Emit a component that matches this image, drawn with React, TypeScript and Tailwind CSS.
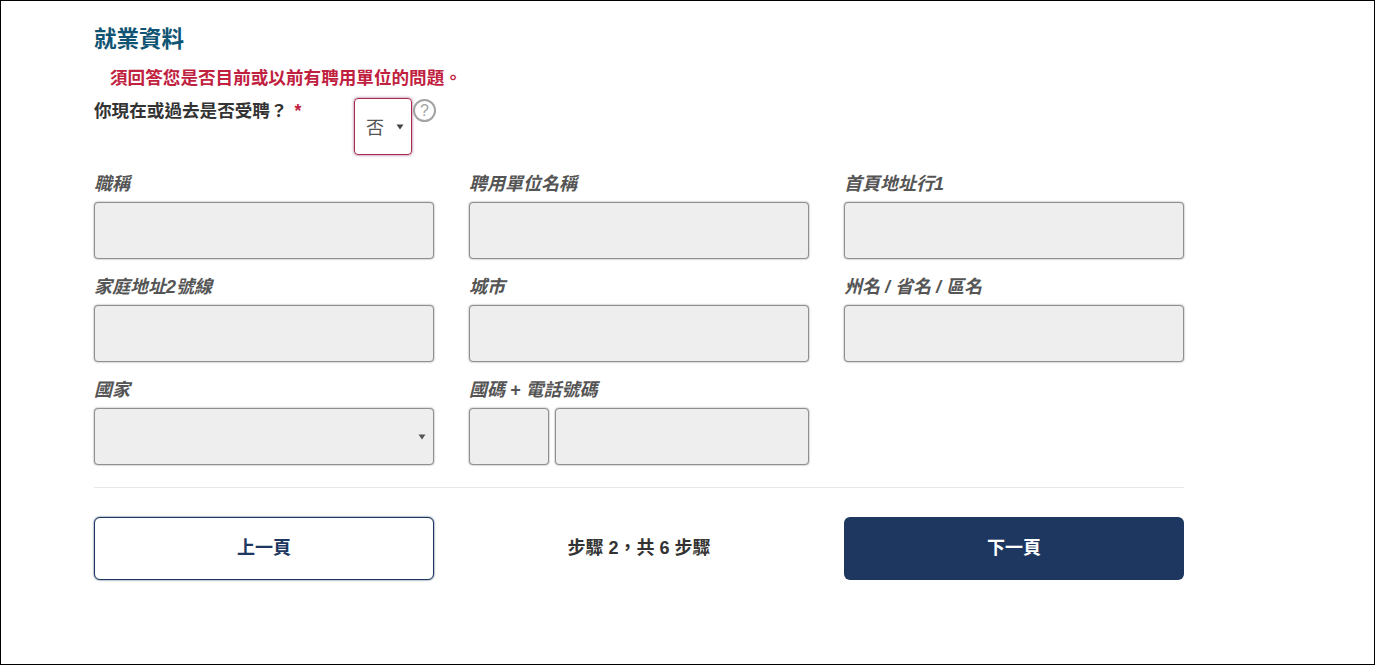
import React from "react";

const FONT = "font-['Liberation_Sans','Noto_Sans_CJK_TC',sans-serif]";

const inputClass =
  "h-[57px] rounded-[4px] border border-[#8f8f8f] shadow-[0_0_2px_#8a8a8a] bg-[#eeeeee]";

const Caret = ({ className }: { className: string }) => (
  <svg viewBox="0 0 8 6" className={className} fill="currentColor">
    <path d="M0.5 0.5h7L4 5.5z" />
  </svg>
);

function Field({ label, children }: { label: string; children?: React.ReactNode }) {
  return (
    <div className="flex flex-col">
      <label className="h-[31px] text-[18px] leading-[26px] font-bold italic text-[#555]">{label}</label>
      {children ?? <div className={inputClass} />}
    </div>
  );
}

export default function App() {
  return (
    <div className={`h-[665px] w-[1375px] overflow-hidden border border-black bg-white ${FONT}`}>
      <div className="ml-[93px] w-[1090px] pt-[22px]">
        <h2 className="h-[33px] text-[22.5px] leading-[33px] font-bold text-[#0f5573]">就業資料</h2>
        <p className="mt-[9px] pl-[16px] text-[17.6px] leading-[26px] font-bold text-[#c0213f]">
          須回答您是否目前或以前有聘用單位的問題。
        </p>

        <div className="mt-[8px] flex">
          <div className="mt-[-1px] w-[260px] text-[17.6px] leading-[26px] font-bold text-[#333]">
            你現在或過去是否受聘？ <span className="ml-[2px] text-[#c0213f]">*</span>
          </div>
          <div className="mt-[-1px] flex h-[57px] w-[58px] items-center justify-between rounded-[4px] border border-[#a82a48] pr-[7px] pl-[11px] shadow-[0_0_3px_rgba(130,50,110,0.8)]">
            <span className="pt-[4px] text-[18px] text-[#555]">否</span>
            <Caret className="h-[6px] w-[8px] text-[#444]" />
          </div>
          <div className="ml-[1px] flex h-[23px] w-[23px] items-center justify-center rounded-full border-2 border-[#a3a3a3] text-[16px] leading-none text-[#a3a3a3]">
            ?
          </div>
        </div>

        <div className="mt-[16px] grid grid-cols-3 gap-x-[35px] gap-y-[15px]">
          <Field label="職稱" />
          <Field label="聘用單位名稱" />
          <Field label="首頁地址行1" />
          <Field label="家庭地址2號線" />
          <Field label="城市" />
          <Field label="州名 / 省名 / 區名" />
          <Field label="國家">
            <div className={`${inputClass} flex items-center justify-end pr-[7px]`}>
              <Caret className="h-[6px] w-[8px] text-[#555]" />
            </div>
          </Field>
          <Field label="國碼 + 電話號碼">
            <div className="flex gap-[6px]">
              <div className={`${inputClass} w-[80px]`} />
              <div className={`${inputClass} flex-1`} />
            </div>
          </Field>
        </div>

        <hr className="mt-[22px] border-t border-[#e8e8e8]" />

        <div className="mt-[29px] grid grid-cols-3 items-center gap-x-[35px]">
          <button className="h-[63px] rounded-[6px] border border-[#1e3760] shadow-[0_0_2px_#1e3760] bg-white text-[18px] font-bold text-[#1e3760]">
            上一頁
          </button>
          <div className="text-center text-[18px] font-bold text-[#333]">步驟 2，共 6 步驟</div>
          <button className="h-[63px] rounded-[6px] bg-[#1e3760] text-[18px] font-bold text-white">
            下一頁
          </button>
        </div>
      </div>
    </div>
  );
}
